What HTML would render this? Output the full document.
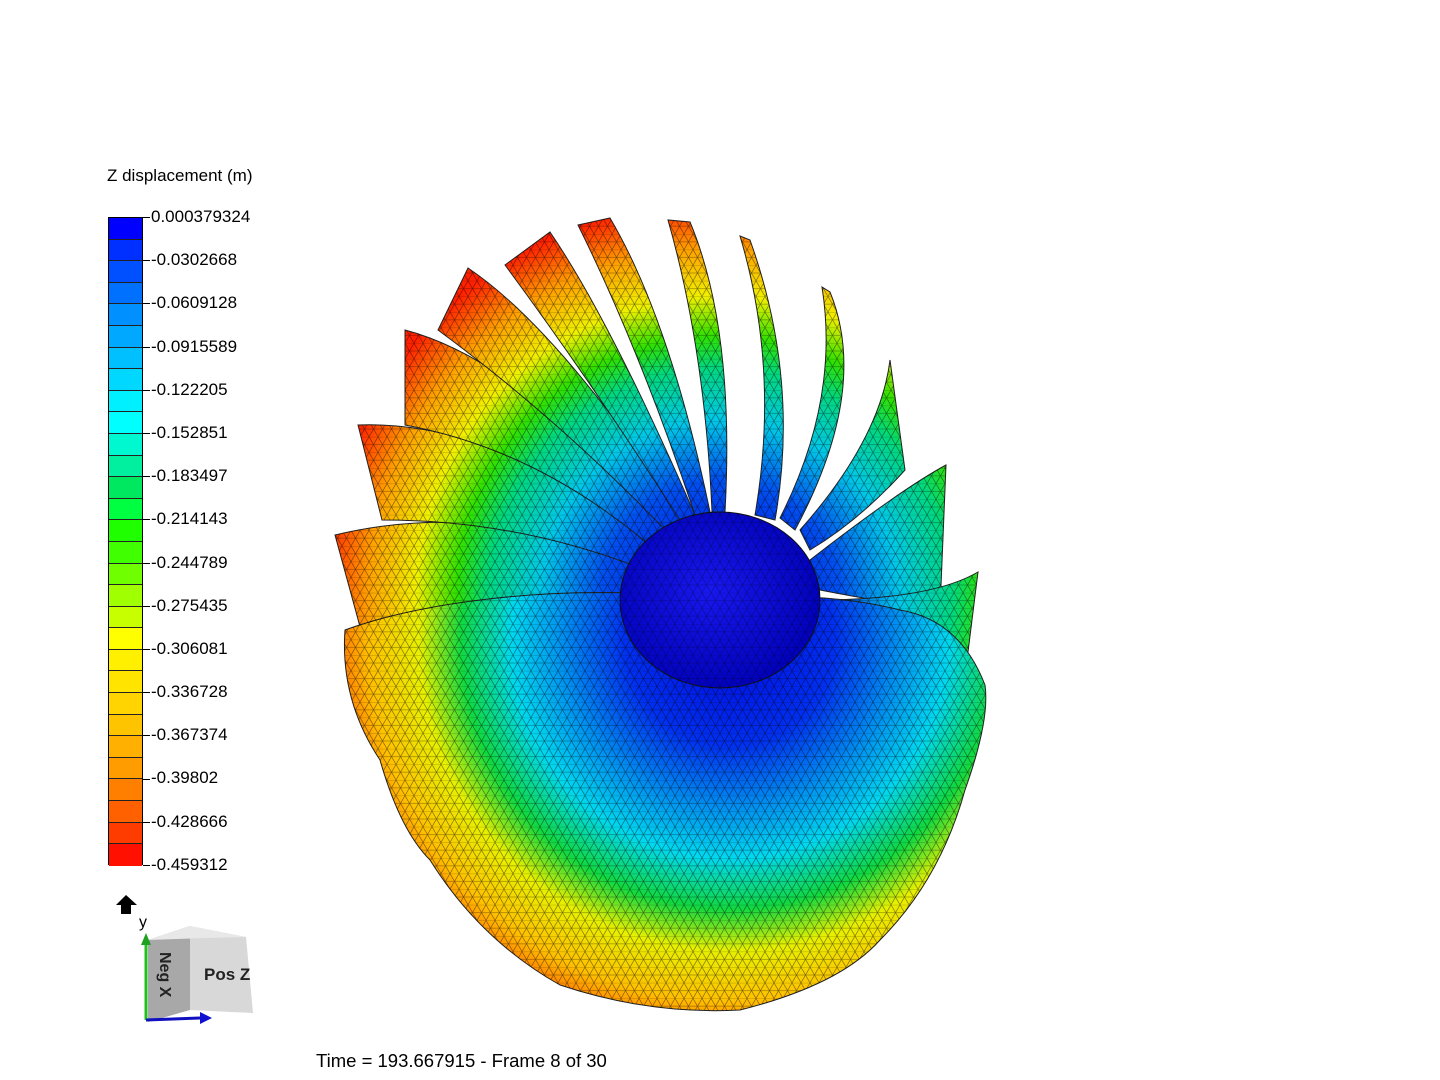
<!DOCTYPE html>
<html><head><meta charset="utf-8"><style>
html,body{margin:0;padding:0;background:#fff;width:1440px;height:1080px;overflow:hidden;font-family:"Liberation Sans",Arial,sans-serif;}
.t{position:absolute;font-size:17px;color:#000;white-space:nowrap;}
#bar{position:absolute;left:108px;top:217px;width:35px;height:648px;border:1px solid #000;box-sizing:border-box;}
#bar div{height:21.6px;box-sizing:border-box;border-bottom:1px solid #222;}
.tk{position:absolute;left:143px;width:7px;height:1px;background:#000;}
</style></head><body>
<div class="t" style="left:107px;top:166px">Z displacement (m)</div>
<div id="bar">
<div style="background:#0000ff"></div><div style="background:#0030ff"></div><div style="background:#0050ff"></div><div style="background:#0070ff"></div><div style="background:#0090ff"></div><div style="background:#00a8ff"></div><div style="background:#00c0ff"></div><div style="background:#00d8ff"></div><div style="background:#00f0ff"></div><div style="background:#00ffff"></div><div style="background:#00f8d0"></div><div style="background:#00f0a0"></div><div style="background:#00e860"></div><div style="background:#00ff40"></div><div style="background:#20ff00"></div><div style="background:#40ff00"></div><div style="background:#70ff00"></div><div style="background:#a0ff00"></div><div style="background:#c8ff00"></div><div style="background:#ffff00"></div><div style="background:#fff000"></div><div style="background:#ffe400"></div><div style="background:#ffd400"></div><div style="background:#ffc400"></div><div style="background:#ffb000"></div><div style="background:#ff9c00"></div><div style="background:#ff8000"></div><div style="background:#ff6000"></div><div style="background:#ff3c00"></div><div style="background:#ff1000;border:none"></div>
</div>
<div class="tk" style="top:217px"></div><div class="tk" style="top:260px"></div><div class="tk" style="top:303px"></div><div class="tk" style="top:347px"></div><div class="tk" style="top:390px"></div><div class="tk" style="top:433px"></div><div class="tk" style="top:476px"></div><div class="tk" style="top:519px"></div><div class="tk" style="top:563px"></div><div class="tk" style="top:606px"></div><div class="tk" style="top:649px"></div><div class="tk" style="top:692px"></div><div class="tk" style="top:735px"></div><div class="tk" style="top:779px"></div><div class="tk" style="top:822px"></div><div class="tk" style="top:865px"></div>
<div class="t" style="left:151px;top:207px">0.000379324</div>
<div class="t" style="left:151px;top:250px">-0.0302668</div>
<div class="t" style="left:151px;top:293px">-0.0609128</div>
<div class="t" style="left:151px;top:337px">-0.0915589</div>
<div class="t" style="left:151px;top:380px">-0.122205</div>
<div class="t" style="left:151px;top:423px">-0.152851</div>
<div class="t" style="left:151px;top:466px">-0.183497</div>
<div class="t" style="left:151px;top:509px">-0.214143</div>
<div class="t" style="left:151px;top:553px">-0.244789</div>
<div class="t" style="left:151px;top:596px">-0.275435</div>
<div class="t" style="left:151px;top:639px">-0.306081</div>
<div class="t" style="left:151px;top:682px">-0.336728</div>
<div class="t" style="left:151px;top:725px">-0.367374</div>
<div class="t" style="left:151px;top:768px">-0.39802</div>
<div class="t" style="left:151px;top:812px">-0.428666</div>
<div class="t" style="left:151px;top:855px">-0.459312</div>
<div class="t" style="left:316px;top:1050px;font-size:18.5px">Time = 193.667915 - Frame 8 of 30</div>

<svg width="1440" height="1080" style="position:absolute;left:0;top:0" xmlns="http://www.w3.org/2000/svg">
<defs>
<pattern id="mesh" width="9" height="15.6" patternUnits="userSpaceOnUse">
<path d="M0,0H9M0,7.8H9M0,15.6L9,0M0,0L9,15.6M-4.5,7.8L4.5,-7.8M4.5,23.4L13.5,7.8" stroke="#000" stroke-width="0.6" fill="none" opacity="0.6"/>
</pattern>
<radialGradient id="disc" gradientUnits="userSpaceOnUse" cx="730" cy="640" r="420">
<stop offset="0" stop-color="#0008e0"/><stop offset="0.25" stop-color="#0030f0"/><stop offset="0.4" stop-color="#0090f0"/><stop offset="0.52" stop-color="#00d8f0"/><stop offset="0.64" stop-color="#10d840"/><stop offset="0.74" stop-color="#e8f000"/><stop offset="0.86" stop-color="#ffc000"/><stop offset="1" stop-color="#ff3000"/>
</radialGradient>
<radialGradient id="hub" cx="0.45" cy="0.45" r="0.6">
<stop offset="0" stop-color="#1818f0"/><stop offset="1" stop-color="#0000b8"/>
</radialGradient>
<radialGradient id="bl" gradientUnits="userSpaceOnUse" cx="720" cy="600" r="400">
<stop offset="0" stop-color="#0000e0"/><stop offset="0.3" stop-color="#0050f0"/><stop offset="0.45" stop-color="#00c8e8"/><stop offset="0.58" stop-color="#00d880"/><stop offset="0.66" stop-color="#30e000"/><stop offset="0.76" stop-color="#f0f000"/><stop offset="0.88" stop-color="#ffa000"/><stop offset="1" stop-color="#ff2000"/>
</radialGradient>
<g id="shapes">
<path id="b1" d="M650,560 Q480,500 335,535 L365,645 Q500,600 640,600 Z"/>
<path id="b2" d="M660,545 Q500,420 358,425 L382,520 Q520,520 645,570 Z"/>
<path id="b3" d="M670,530 Q520,360 405,330 L405,425 Q540,450 655,550 Z"/>
<path id="b4" d="M685,520 Q560,330 468,268 L438,330 Q560,420 670,535 Z"/>
<path id="b5" d="M695,515 Q610,320 550,232 L505,265 Q590,380 680,520 Z"/>
<path id="b6" d="M710,512 Q670,320 610,218 L578,225 Q640,350 695,515 Z"/>
<path id="b7" d="M725,512 Q735,330 690,222 L668,220 Q705,350 712,512 Z"/>
<path id="b8" d="M755,515 Q780,370 740,236 L750,240 Q800,380 775,520 Z"/>
<path id="b9" d="M780,518 Q840,400 822,287 L830,292 Q870,390 795,530 Z"/>
<path id="b10" d="M800,530 Q880,440 890,360 L905,470 Q860,520 810,550 Z"/>
<path id="b11" d="M810,560 Q900,490 946,465 L940,610 Q870,600 820,590 Z"/>
<path id="b12" d="M815,600 Q930,600 978,572 L962,700 Q880,680 815,620 Z"/>
<path id="dk" d="M345,630 Q340,700 380,760 Q400,830 430,860 Q480,940 560,985 Q650,1015 740,1010 Q840,985 880,940 Q940,880 965,790 Q990,720 985,685 Q960,620 900,610 Q820,590 720,600 Q600,585 480,600 Q400,610 345,630 Z"/>
</g>
<clipPath id="clip"><use href="#b1"/><use href="#b2"/><use href="#b3"/><use href="#b4"/><use href="#b5"/><use href="#b6"/><use href="#b7"/><use href="#b8"/><use href="#b9"/><use href="#b10"/><use href="#b11"/><use href="#b12"/><use href="#dk"/></clipPath>
</defs>
<g stroke="#222" stroke-width="1" fill="url(#bl)">
<use href="#b1"/><use href="#b2"/><use href="#b3"/><use href="#b4"/><use href="#b5"/><use href="#b6"/><use href="#b7"/><use href="#b8"/><use href="#b9"/><use href="#b10"/><use href="#b11"/><use href="#b12"/>
<use href="#dk" fill="url(#disc)"/>
</g>
<rect x="300" y="200" width="720" height="830" fill="url(#mesh)" clip-path="url(#clip)" opacity="0.9"/>
<ellipse cx="720" cy="600" rx="100" ry="88" fill="url(#hub)" stroke="#111" stroke-width="1"/>
<ellipse cx="720" cy="600" rx="100" ry="88" fill="url(#mesh)" opacity="0.6"/>
<polygon points="126,895 116,905 121,905 121,914 131,914 131,905 137,905" fill="#000"/>
<text x="139" y="927" font-family="Liberation Sans,sans-serif" font-size="16">y</text>
<polygon points="148,940 190,926 190,1010 148,1022" fill="#a8a8a8"/>
<polygon points="190,926 246,937 253,1013 190,1010" fill="#d8d8d8"/>
<polygon points="148,940 190,926 246,937 205,938" fill="#e8e8e8"/>
<text x="204" y="980" font-family="Liberation Sans,sans-serif" font-size="17" font-weight="bold" fill="#222">Pos Z</text>
<text x="0" y="0" transform="translate(160,952) rotate(90)" font-family="Liberation Sans,sans-serif" font-size="16" font-weight="bold" fill="#222">Neg X</text>
<line x1="146" y1="1020" x2="146" y2="942" stroke="#20c020" stroke-width="3"/>
<polygon points="146,933 141,945 151,945" fill="#20a020"/>
<line x1="146" y1="1020" x2="200" y2="1018" stroke="#1010c0" stroke-width="3"/>
<polygon points="212,1018 200,1012 200,1024" fill="#1010d0"/>
</svg>
</body></html>
